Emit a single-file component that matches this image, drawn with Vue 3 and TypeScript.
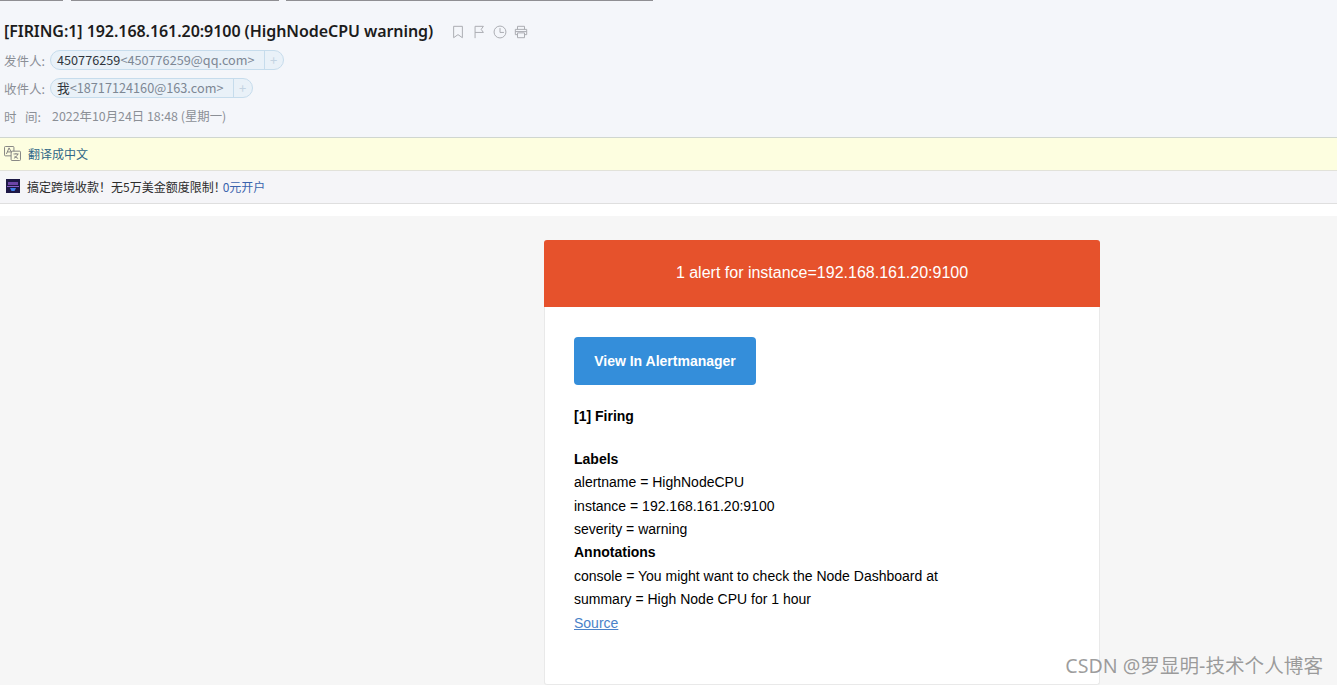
<script setup lang="ts">
interface Contact {
  label: string
  name: string
  addr: string
}

const contacts: Contact[] = [
  { label: '发件人:', name: '450776259', addr: '<450776259@qq.com>' },
  { label: '收件人:', name: '我', addr: '<18717124160@163.com>' }
]

const labels: string[] = ['alertname = HighNodeCPU', 'instance = 192.168.161.20:9100', 'severity = warning']
const annotations: string[] = [
  'console = You might want to check the Node Dashboard at',
  'summary = High Node CPU for 1 hour'
]
</script>

<template>
  <div class="page">
    <div class="tabs">
      <span class="tab tab-a"></span>
      <span class="tab tab-b"></span>
      <span class="tab tab-c"></span>
    </div>

    <header class="mail-head">
      <div class="title-row">
        <h1 class="subject">[FIRING:1] 192.168.161.20:9100 (HighNodeCPU warning)</h1>
        <div class="actions">
          <svg viewBox="0 0 16 16"><path d="M3 1.500h10v13l-5-3.500-5 3.500z" /></svg>
          <svg viewBox="0 0 16 16"><path d="M3.500 15V1.500h9.500l-2.500 3.500 2.500 3.500H3.500" /></svg>
          <svg viewBox="0 0 16 16"><circle cx="8" cy="8" r="6.800" /><path d="M8 3.500V8.500h4.500" /></svg>
          <svg viewBox="0 0 16 16"><path d="M4 5V1.500h8V5M4 11H1.500V5h13v6H12M4 9h8v5.500H4zM1.500 7.500h13" /></svg>
        </div>
      </div>
      <div v-for="c in contacts" :key="c.label" class="meta-row">
        <span class="meta-label">{{ c.label }}</span>
        <span class="chip">
          <span class="chip-main"><b class="chip-name">{{ c.name }}</b>{{ c.addr }}</span>
          <span class="chip-add">+</span>
        </span>
      </div>
      <div class="meta-row time-row">
        <span class="time-label">时&nbsp;&nbsp;&nbsp;间:</span>
        <span class="time-value">2022年10月24日 18:48 (星期一)</span>
      </div>
    </header>

    <div class="translate-bar">
      <svg class="translate-icon" viewBox="0 0 18 16">
        <rect x="0.500" y="0.500" width="10" height="10" rx="1" />
        <rect x="7.500" y="5.500" width="10" height="10" rx="1" fill="#fdfee0" />
        <path d="M2.500 8.500l2.800-6.500 2.700 5M3.500 6.300h3.500M10 8.500h5.500M12.700 7.500v1M14.500 8.500c-.6 2.500-2.500 4-4 4.500M11 10.500c.8 1.200 2.500 2.300 4 2.700" />
      </svg>
      <span class="translate-link">翻译成中文</span>
    </div>

    <div class="ad-bar">
      <svg class="ad-logo" viewBox="0 0 14 14">
        <rect width="14" height="14" fill="#1d1846" />
        <rect x="2" y="3" width="10" height="3" fill="#6d45a8" />
        <rect x="1" y="7" width="12" height="1" fill="#8a5cc8" />
        <path d="M4 9h6l-1.500 3h-3z" fill="#3f7fe8" />
      </svg>
      <span>搞定跨境收款！无5万美金额度限制！</span>
      <span class="ad-link">0元开户</span>
    </div>
    <div class="spacer"></div>

    <main class="mail-body">
      <article class="alert-card">
        <div class="alert-title">1 alert for instance=192.168.161.20:9100</div>
        <div class="alert-content">
          <span class="view-btn">View In Alertmanager</span>
          <div class="firing"><strong>[1] Firing</strong></div>
          <div class="details">
            <strong>Labels</strong>
            <div v-for="l in labels" :key="l">{{ l }}</div>
            <strong>Annotations</strong>
            <div v-for="a in annotations" :key="a">{{ a }}</div>
            <a class="source">Source</a>
          </div>
        </div>
      </article>
    </main>

    <div class="watermark">CSDN @罗显明-技术个人博客</div>
  </div>
</template>

<style>
html,
body {
  margin: 0;
  background: #f6f6f6;
}
</style>

<style scoped>
.page {
  position: relative;
  width: 1337px;
  height: 685px;
  overflow: hidden;
  background: #f6f6f6;
  font-family: "Liberation Sans", "Noto Sans CJK SC", sans-serif;
}

.tabs {
  display: flex;
  height: 1px;
  background: #f4f6fa;
}

.tab {
  height: 1px;
  background: #8f8f93;
}

.tab-a {
  width: 63px;
}

.tab-b {
  width: 208px;
  margin-left: 8px;
}

.tab-c {
  width: 367px;
  margin-left: 7px;
}

.mail-head {
  height: 136px;
  box-sizing: border-box;
  padding: 18px 0 0 4px;
  background: #f4f6fa;
}

.title-row {
  display: flex;
  align-items: center;
  height: 25px;
  margin-bottom: -1px;
}

.subject {
  margin: 0;
  font-family: "Noto Sans", "Noto Sans CJK SC", sans-serif;
  font-size: 16px;
  font-weight: 600;
  letter-spacing: -0.06px;
  line-height: 25px;
  color: #1c1c1c;
  white-space: nowrap;
}

.actions {
  display: flex;
  gap: 7px;
  margin-left: 18px;
}

.actions svg {
  width: 14px;
  height: 14px;
  fill: none;
  stroke: #a9abb0;
  stroke-width: 1.1;
}

.meta-row {
  display: flex;
  align-items: center;
  height: 22px;
  margin-top: 6px;
  font-family: "Noto Sans CJK SC", sans-serif;
  font-size: 12.500px;
  color: #8b8f96;
}

.meta-label {
  width: 46px;
  flex-shrink: 0;
}

.chip {
  display: flex;
  align-items: stretch;
  height: 20px;
  box-sizing: border-box;
  border: 1px solid #c6dcec;
  border-radius: 10px;
  background: #e9f1f8;
  font-size: 12.700px;
  line-height: 18px;
}

.chip-main {
  padding: 0 9px 0 6px;
  color: #7d8794;
  white-space: nowrap;
}

.chip-name {
  font-weight: 400;
  color: #30353b;
}

.chip-add {
  width: 18px;
  border-left: 1px solid #c6dcec;
  text-align: center;
  color: #c3d3e2;
  font-size: 13px;
}

.time-row {
  margin-top: 6px;
}

.time-label {
  width: 48px;
  flex-shrink: 0;
}

.time-value {
  font-size: 12.400px;
}

.translate-bar {
  display: flex;
  align-items: center;
  height: 34px;
  box-sizing: border-box;
  padding: 0 0 1px 4px;
  border-top: 1px solid #cfd6d0;
  border-bottom: 1px solid #e2e2da;
  background: #fdfee0;
}

.translate-icon {
  width: 17px;
  height: 15px;
  fill: none;
  stroke: #7d7d7d;
  stroke-width: 1;
}

.translate-link {
  margin-left: 7px;
  font-family: "Noto Sans CJK SC", sans-serif;
  font-size: 12px;
  color: #2f6687;
}

.ad-bar {
  display: flex;
  align-items: center;
  height: 33px;
  box-sizing: border-box;
  padding: 0 0 2px 6px;
  border-bottom: 1px solid #dfdfdf;
  background: #f5f5f8;
  font-family: "Noto Sans CJK SC", sans-serif;
  font-size: 12px;
  color: #2c2c2c;
}

.ad-logo {
  width: 14px;
  height: 14px;
  margin-right: 7px;
}

.ad-link {
  margin-left: -3px;
  color: #3a63ad;
}

.spacer {
  height: 12px;
  background: #fff;
}

.mail-body {
  display: flex;
  padding: 24px 0 0 544px;
  box-sizing: border-box;
  width: 1337px;
}

.alert-card {
  display: flex;
  flex-direction: column;
  width: 556px;
  height: 445px;
}

.alert-title {
  height: 67px;
  flex-shrink: 0;
  border-radius: 3px 3px 0 0;
  background: #e6522c;
  color: #fff;
  font-size: 16px;
  line-height: 66px;
  text-align: center;
}

.alert-content {
  flex: 1;
  padding: 30px 29px 0;
  border: 1px solid #e9e9e9;
  border-top: 0;
  border-radius: 0 0 3px 3px;
  background: #fff;
  font-size: 14px;
  line-height: 23.400px;
  color: #000;
}

.view-btn {
  display: block;
  width: 182px;
  height: 48px;
  border-radius: 4px;
  background: #348eda;
  color: #fff;
  font-weight: 700;
  line-height: 48px;
  text-align: center;
}

.firing {
  margin-top: 20px;
}

.details {
  margin-top: 19.300px;
}

.source {
  color: #4a82c8;
  text-decoration: underline;
}

.watermark {
  position: absolute;
  right: 14px;
  bottom: 6px;
  font-family: "Noto Sans", "Noto Sans CJK SC", sans-serif;
  font-size: 19.600px;
  color: rgba(120, 120, 120, 0.72);
  white-space: nowrap;
}
</style>
